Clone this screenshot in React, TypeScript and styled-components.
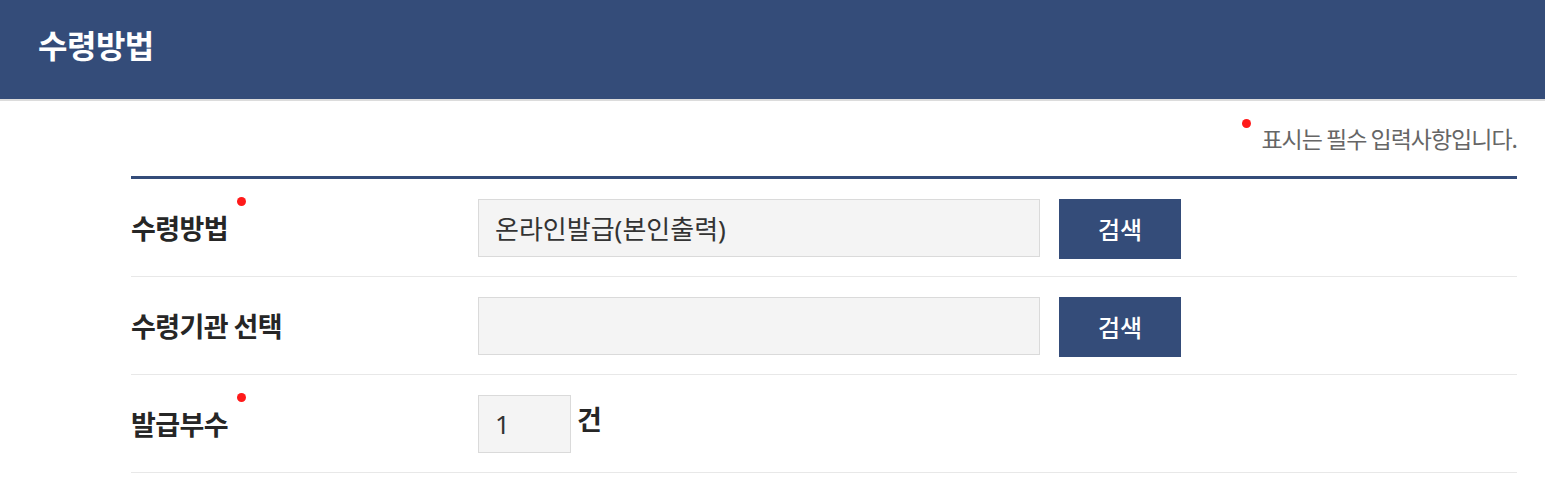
import React from "react";
import styled, { createGlobalStyle } from "styled-components";

const Global = createGlobalStyle`
  html, body { margin: 0; padding: 0; background: #fff; }
  body { font-family: "Noto Sans CJK KR", "Noto Sans", sans-serif; }
  * { box-sizing: border-box; }
`;

const NAVY = "#344c79";

const Header = styled.header`
  height: 101px;
  background: ${NAVY};
  border-bottom: 2px solid #dcdcdc;
  display: flex;
  align-items: center;
  padding: 0 0 12px 38px;
`;

const Title = styled.h1`
  margin: 0;
  color: #fff;
  font-size: 32px;
  font-weight: 700;
  letter-spacing: -0.5px;
`;

const Content = styled.main`
  padding: 0 28px 0 131px;
`;

const Note = styled.p`
  margin: 0;
  padding-top: 22px;
  height: 75px;
  text-align: right;
  color: #666;
  font-size: 23px;
  letter-spacing: -1px;
  line-height: 30px;
`;

const Dot = styled.span<{ $top: number; $left?: number; $right?: number }>`
  position: absolute;
  top: ${(p) => p.$top}px;
  ${(p) => (p.$left !== undefined ? `left: ${p.$left}px;` : "")}
  ${(p) => (p.$right !== undefined ? `right: ${p.$right}px;` : "")}
  width: 9px;
  height: 9px;
  border-radius: 50%;
  background: #ff1a1a;
`;

const NoteText = styled.span`
  position: relative;
  padding-left: 19px;
`;

const Table = styled.div`
  border-top: 3px solid ${NAVY};
`;

const Row = styled.div`
  display: grid;
  grid-template-columns: 347px 1fr;
  height: 98px;
  border-bottom: 1px solid #e8e8e8;
`;

const LabelCell = styled.div`
  display: flex;
  align-items: center;
`;

const Label = styled.span`
  position: relative;
  font-size: 27px;
  font-weight: 700;
  color: #262626;
  letter-spacing: -0.6px;
  padding-right: 18px;
`;

const FieldCell = styled.div`
  display: flex;
  align-items: flex-start;
  padding-top: 20px;
`;

const Input = styled.div<{ $width: number }>`
  width: ${(p) => p.$width}px;
  height: 58px;
  background: #f4f4f4;
  border: 1px solid #dadada;
  display: flex;
  align-items: center;
  padding-left: 16px;
  font-family: "Noto Sans", "Noto Sans CJK KR", sans-serif;
  font-size: 26px;
  color: #333;
`;

const Button = styled.button`
  margin-left: 19px;
  width: 122px;
  height: 60px;
  border: 0;
  background: ${NAVY};
  color: #fff;
  font-family: inherit;
  font-size: 24px;
  font-weight: 500;
  padding: 0 0 2px;
`;

const Unit = styled.span`
  margin-left: 6px;
  margin-top: 4px;
  font-size: 27px;
  font-weight: 700;
  color: #262626;
`;

export default function App() {
  return (
    <>
      <Global />
      <Header>
        <Title>수령방법</Title>
      </Header>
      <Content>
        <Note>
          <NoteText>
            <Dot $top={-2} $left={0} />
            표시는 필수 입력사항입니다.
          </NoteText>
        </Note>
        <Table>
          <Row>
            <LabelCell>
              <Label>
                수령방법
                <Dot $top={-11} $right={0} />
              </Label>
            </LabelCell>
            <FieldCell>
              <Input $width={562}>온라인발급(본인출력)</Input>
              <Button>검색</Button>
            </FieldCell>
          </Row>
          <Row>
            <LabelCell>
              <Label>수령기관 선택</Label>
            </LabelCell>
            <FieldCell>
              <Input $width={562} />
              <Button>검색</Button>
            </FieldCell>
          </Row>
          <Row>
            <LabelCell>
              <Label>
                발급부수
                <Dot $top={-11} $right={0} />
              </Label>
            </LabelCell>
            <FieldCell>
              <Input $width={93}>1</Input>
              <Unit>건</Unit>
            </FieldCell>
          </Row>
        </Table>
      </Content>
    </>
  );
}
